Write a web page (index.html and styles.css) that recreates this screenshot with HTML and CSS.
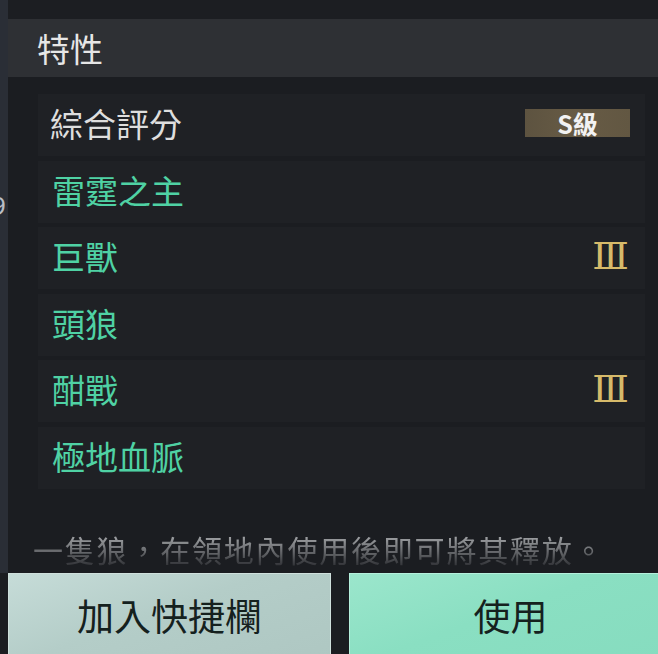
FILE: index.html
```html
<!DOCTYPE html>
<html lang="zh-Hant">
<head>
  <meta charset="UTF-8">
  <meta name="viewport" content="width=device-width, initial-scale=1.0">
  <title>特性</title>
  <link rel="stylesheet" href="styles.css">
</head>
<body>
<div class="page">
  <div class="side">
    <span class="side-mark top">]</span>
    <span class="side-mark nine">9</span>
  </div>
  <div class="panel">
    <div class="top-strip"></div>
    <div class="header">特性</div>
    <div class="list">
      <div class="row">
        <span class="name is-plain">綜合評分</span>
        <span class="badge">S級</span>
      </div>
      <div class="row">
        <span class="name">雷霆之主</span>
      </div>
      <div class="row">
        <span class="name">巨獸</span>
        <span class="level">Ⅲ</span>
      </div>
      <div class="row">
        <span class="name">頭狼</span>
      </div>
      <div class="row">
        <span class="name">酣戰</span>
        <span class="level">Ⅲ</span>
      </div>
      <div class="row">
        <span class="name">極地血脈</span>
      </div>
    </div>
    <div class="desc">
      <p>一隻狼，在領地內使用後即可將其釋放。</p>
    </div>
  </div>
</div>
<div class="actions">
  <button class="btn btn-light">加入快捷欄</button>
  <button class="btn btn-main">使用</button>
</div>
</body>
</html>
```

FILE: styles.css
```css
html, body {
  margin: 0;
  height: 100%;
}
body {
  background: #1b1d21;
  font-family: "Noto Sans CJK TC", "Noto Sans", sans-serif;
  overflow: hidden;
  width: 658px;
  height: 654px;
}
.page {
  display: flex;
  height: 573px;
}
.side {
  width: 8px;
  background: #2a2e36;
  overflow: hidden;
  display: flex;
  flex-direction: column;
  color: #b9bec6;
  font-family: "Noto Sans", sans-serif;
}
.side-mark {
  display: block;
  margin-left: -9px;
  font-size: 26px;
  line-height: 26px;
}
.side-mark.top {
  margin-top: -18px;
}
.side-mark.nine {
  margin-top: 184px;
}
.panel {
  flex: 1;
  display: flex;
  flex-direction: column;
  background: #1b1d21;
}
.top-strip {
  height: 19px;
  background: #1c1e22;
}
.header {
  height: 58px;
  line-height: 58px;
  padding-left: 29px;
  background: #2e3034;
  color: #e6e6e6;
  font-size: 33px;
}
.list {
  padding: 17px 13px 0 30px;
  display: flex;
  flex-direction: column;
  gap: 4.6px;
}
.row {
  height: 62px;
  box-sizing: border-box;
  display: flex;
  align-items: center;
  justify-content: space-between;
  padding: 0 15px 4px 14px;
  background: #1f2125;
}
.name {
  font-size: 33px;
  line-height: 40px;
  color: #4fd2a4;
}
.name.is-plain {
  color: #dedede;
  margin-left: -2px;
}
.badge {
  width: 105px;
  height: 28px;
  line-height: 28px;
  text-align: center;
  background: linear-gradient(90deg, #5d5340, #675b45 50%, #625742);
  color: #f2f2f2;
  font-size: 25px;
  font-weight: bold;
}
.level {
  margin-right: 1px;
  color: #d6ba6a;
  font-family: "DejaVu Serif", "Liberation Serif", serif;
  font-size: 38px;
  line-height: 36px;
}
.desc {
  height: 84px;
  padding-left: 25px;
  overflow: hidden;
  -webkit-mask-image: linear-gradient(to bottom, #000 58%, rgba(0,0,0,.3) 86%, transparent);
  mask-image: linear-gradient(to bottom, #000 58%, rgba(0,0,0,.3) 86%, transparent);
}
.desc p {
  margin: 0;
  padding-top: 42px;
  white-space: nowrap;
  font-size: 30px;
  line-height: 36px;
  letter-spacing: 1.8px;
  color: #9b9da0;
}
.actions {
  display: flex;
  gap: 18px;
  padding-left: 8px;
  background: #1b1d21;
}
.btn {
  flex: none;
  width: 323px;
  height: 90px;
  padding: 0 0 7px;
  border: 1px solid #d9e8e4;
  border-bottom: none;
  font-family: "Noto Sans CJK TC", "Noto Sans", sans-serif;
  font-size: 37px;
  color: #15211e;
  outline: none;
}
.btn-light {
  background: linear-gradient(160deg, #c6dcd8, #b4cdc8 45%, #aec7c2);
  border-color: #cfe0dc;
}
.btn-main {
  background: linear-gradient(160deg, #9be6cc, #8adfc2 45%, #86dcbf);
  border-color: #b5f0dc;
}
```
